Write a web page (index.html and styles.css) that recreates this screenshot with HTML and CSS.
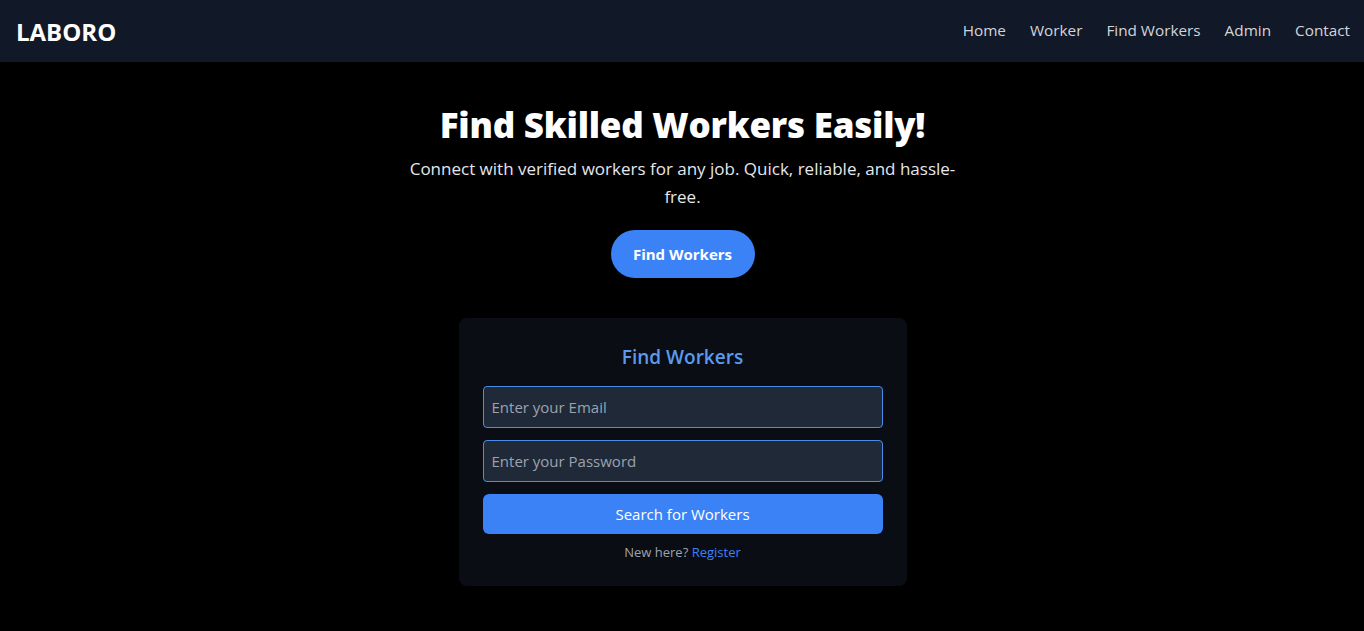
FILE: index.html
```html
<!DOCTYPE html>
<html lang="en">
<head>
<meta charset="utf-8">
<title>Laboro</title>
<link rel="stylesheet" href="styles.css">
</head>
<body>
<header class="navbar">
  <div class="logo">LABORO</div>
  <nav class="nav-links">
    <a href="#">Home</a>
    <a href="#">Worker</a>
    <a href="#">Find Workers</a>
    <a href="#">Admin</a>
    <a href="#">Contact</a>
  </nav>
</header>
<main class="main">
  <section class="hero">
    <h1 class="hero-title">Find Skilled Workers Easily!</h1>
    <p class="hero-text">Connect with verified workers for any job. Quick, reliable, and hassle-free.</p>
    <a href="#" class="hero-btn">Find Workers</a>
  </section>
  <section class="card">
    <h2 class="card-title">Find Workers</h2>
    <form class="form">
      <input class="input" type="email" placeholder="Enter your Email">
      <input class="input" type="password" placeholder="Enter your Password">
      <button class="submit" type="button">Search for Workers</button>
    </form>
    <p class="note">New here? <a href="#">Register</a></p>
  </section>
</main>
</body>
</html>
```

FILE: styles.css
```css
* { box-sizing: border-box; }
html, body { margin: 0; padding: 0; }
body {
  background: #000000;
  color: #ffffff;
  font-family: "Open Sans", "Noto Sans", sans-serif;
}
.navbar {
  height: 62px;
  background: #111827;
  display: flex;
  align-items: center;
  justify-content: space-between;
  padding: 0 14px 0 16px;
}
.logo {
  font-size: 24px;
  font-weight: 700;
  color: #ffffff;
}
.nav-links {
  display: flex;
  gap: 24px;
  padding-bottom: 3px;
}
.nav-links a {
  color: #d1d5db;
  text-decoration: none;
  font-size: 15.3px;
}
.main {
  display: flex;
  flex-direction: column;
  align-items: center;
  padding-left: 1px;
}
.hero {
  display: flex;
  flex-direction: column;
  align-items: center;
  text-align: center;
  padding-top: 43px;
}
.hero-title {
  margin: 0;
  font-size: 35px;
  line-height: 40px;
  font-weight: 800;
  letter-spacing: -0.25px;
}
.hero-text {
  margin: 10px 0 0;
  max-width: 560px;
  font-size: 17px;
  line-height: 28px;
  color: #e5e7eb;
}
.hero-btn {
  margin-top: 19px;
  width: 144px;
  height: 48px;
  border-radius: 24px;
  background: #3b82f6;
  color: #ffffff;
  font-weight: 700;
  font-size: 15px;
  text-decoration: none;
  display: flex;
  align-items: center;
  justify-content: center;
}
.card {
  margin-top: 40px;
  width: 448px;
  background: #0a0d14;
  border-radius: 8px;
  padding: 24px;
  text-align: center;
}
.card-title {
  margin: 0 0 16px;
  font-size: 19px;
  line-height: 30px;
  font-weight: 600;
  color: #5a9bef;
}
.form {
  display: flex;
  flex-direction: column;
  gap: 12px;
  margin-top: -2px;
}
.input {
  height: 42px;
  background: #1f2937;
  border: 1px solid #4a8ce8;
  border-radius: 4px;
  padding: 0 8px;
  color: #ffffff;
  font-family: inherit;
  font-size: 15px;
}
.input::placeholder { color: #9ca3af; }
.submit {
  height: 40px;
  background: #3b82f6;
  border: none;
  border-radius: 6px;
  color: #ffffff;
  font-family: inherit;
  font-size: 15px;
}
.note {
  margin: 8px 0 0;
  font-size: 13px;
  line-height: 20px;
  color: #9ca3af;
}
.note a {
  color: #3b82f6;
  text-decoration: none;
}
```
